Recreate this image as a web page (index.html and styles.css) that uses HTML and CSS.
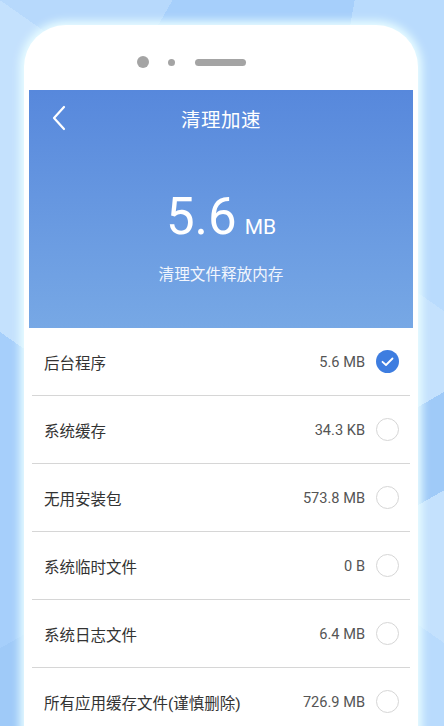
FILE: index.html
```html
<!DOCTYPE html>
<html>
	<head>
		<title>清理加速</title>
		<meta charset="UTF-8">
		<meta name="viewport" content="width=device-width, initial-scale=1" />
		<link rel="stylesheet" href="styles.css">
	</head>
	<body>
		<div class="phone">
			<div class="sensors">
				<span class="camera"></span>
				<span class="dot"></span>
				<span class="speaker"></span>
			</div>
			<div class="hero">
				<div class="titlebar">
					<svg class="back" width="16" height="26" viewBox="0 0 16 26">
						<path d="M13 2 L3 13 L13 24" fill="none" stroke="#fff" stroke-width="2.2" stroke-linecap="round" stroke-linejoin="round"/>
					</svg>
					<h1>清理加速</h1>
				</div>
				<div class="amount"><span class="num">5.6</span><span class="unit">MB</span></div>
				<p class="hint">清理文件释放内存</p>
			</div>
			<ul class="list">
				<li class="row"><span class="label">后台程序</span><span class="size">5.6 MB</span>
					<span class="check on"><svg width="23" height="23" viewBox="0 0 23 23"><path d="M6.5 11.8 L10 15 L16.5 8.5" fill="none" stroke="#fff" stroke-width="1.8" stroke-linecap="round" stroke-linejoin="round"/></svg></span></li>
				<li class="row"><span class="label">系统缓存</span><span class="size">34.3 KB</span><span class="check"></span></li>
				<li class="row"><span class="label">无用安装包</span><span class="size">573.8 MB</span><span class="check"></span></li>
				<li class="row"><span class="label">系统临时文件</span><span class="size">0 B</span><span class="check"></span></li>
				<li class="row"><span class="label">系统日志文件</span><span class="size">6.4 MB</span><span class="check"></span></li>
				<li class="row"><span class="label">所有应用缓存文件(谨慎删除)</span><span class="size">726.9 MB</span><span class="check"></span></li>
			</ul>
		</div>
	</body>
</html>
```
FILE: styles.css
```css
/*Page*/
body{
	margin: 0;
	height: 726px;
	overflow: hidden;
	font-family: Roboto, "Noto Sans CJK SC", sans-serif;
	background:
		linear-gradient(150deg, transparent 0 66%, #9fcaf8 66% 76%, transparent 76%),
		linear-gradient(215deg, transparent 0 30%, #c4e1fd 30% 62%, transparent 62%),
		linear-gradient(120deg, #b7d9fc 0 20%, transparent 20%),
		linear-gradient(100deg, #a6cffb 0 62%, #b9dbfd 62%);
}

/*Phone*/
.phone{
	margin: 25px 0 0 24px;
	width: 384px;
	height: 720px;
	padding: 0 5px;
	background: #fff;
	border-radius: 42px 42px 0 0;
	box-shadow: 0 0 8px 4px #e9fdff;
}
.sensors{
	height: 65px;
	display: flex;
	align-items: center;
	padding-left: 108px;
	box-sizing: border-box;
	padding-top: 9px;
}
.camera{
	width: 12px;
	height: 12px;
	border-radius: 50%;
	background: #a4a4a4;
}
.dot{
	width: 7px;
	height: 7px;
	border-radius: 50%;
	background: #a4a4a4;
	margin-left: 19px;
}
.speaker{
	width: 51px;
	height: 7px;
	border-radius: 4px;
	background: #a4a4a4;
	margin-left: 20px;
}

/*Header*/
.hero{
	height: 238px;
	background: linear-gradient(#5788dc, #77a8e5);
	color: #fff;
	text-align: center;
}
.titlebar{
	height: 56px;
	display: flex;
	align-items: center;
	justify-content: center;
	position: relative;
}
.titlebar h1{
	margin: 0;
	font-size: 19.5px;
	font-weight: normal;
	letter-spacing: 0.5px;
}
.back{
	position: absolute;
	left: 22px;
	top: 15px;
}
.amount{
	margin-top: 43px;
	line-height: 56px;
	height: 56px;
}
.num{
	font-size: 51px;
}
.unit{
	font-size: 21px;
	margin-left: 8px;
}
.hint{
	margin: 17px 0 0;
	font-size: 15.6px;
	color: #f2f6fd;
}

/*List*/
.list{
	list-style: none;
	margin: 0 3px;
	padding: 0;
}
.row{
	height: 68px;
	border-bottom: 1px solid #d6d6d6;
	display: flex;
	align-items: center;
	padding: 0 11px 0 12px;
	box-sizing: border-box;
}
.label{
	flex: 1;
	font-size: 15.5px;
	color: #333;
}
.size{
	font-size: 14.6px;
	color: #555;
	margin-right: 11px;
}
.check{
	width: 23px;
	height: 23px;
	border-radius: 50%;
	border: 1.5px solid #d6d6d6;
	box-sizing: border-box;
}
.check.on{
	border: none;
	background: #3e7de0;
}
.check svg{
	display: block;
}
```
